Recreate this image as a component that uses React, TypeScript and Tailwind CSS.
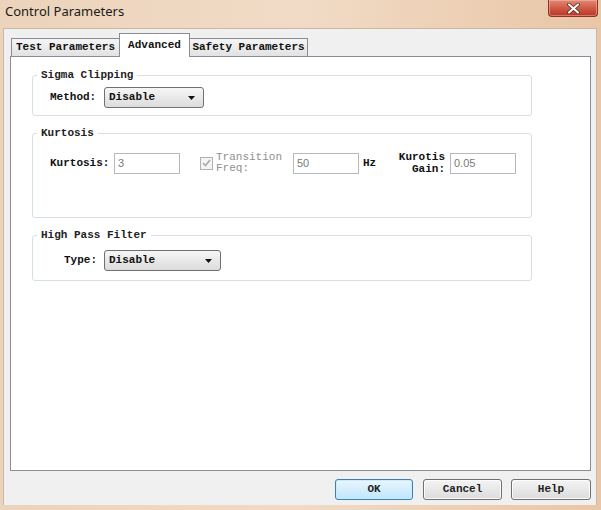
import React from "react";

const mono = { fontFamily: '"Liberation Mono", "DejaVu Sans Mono", monospace' };
const sans = { fontFamily: '"Liberation Sans", Arial, sans-serif' };

function Select({ width, value }: { width: string; value: string }) {
  return (
    <div
      className={`${width} h-[21px] flex items-center justify-between pl-[4px] pr-[8px] rounded-[3px] border border-[#707070] bg-gradient-to-b from-[#f6f6f6] to-[#dcdcdc] text-[11px] font-bold text-[#111]`}
      style={mono}
    >
      <span>{value}</span>
      <svg width="7" height="4" viewBox="0 0 7 4">
        <polygon points="0,0 7,0 3.5,4" fill="#111" />
      </svg>
    </div>
  );
}

function Input({ value }: { value: string }) {
  return (
    <div
      className="w-[66px] h-[21px] flex items-center pl-[3px] border border-[#b5b8bd] bg-white text-[11px] text-[#7a7a7a]"
      style={sans}
    >
      {value}
    </div>
  );
}

function Button({ label, width, primary }: { label: string; width: string; primary?: boolean }) {
  return (
    <div
      className={`${width} h-[21px] flex items-center justify-center rounded-[3px] border text-[11px] font-bold text-[#222] ${
        primary
          ? "border-[#3c7fb1] bg-gradient-to-b from-[#eaf6fd] to-[#bee6fd] shadow-[inset_0_0_0_1px_#c9ecfb]"
          : "border-[#707070] bg-gradient-to-b from-[#f4f4f4] to-[#dcdcdc] shadow-[inset_0_0_0_1px_#fbfbfb]"
      }`}
      style={mono}
    >
      {label}
    </div>
  );
}

export default function App() {
  return (
    <div className="w-[601px] h-[510px] flex flex-col bg-gradient-to-r from-[#ecd3bb] via-[#f1dbc6] to-[#e9c6a6] overflow-hidden">
      {/* Title bar */}
      <div className="h-[28px] flex items-start justify-between pl-[5px] pr-[3px]">
        <span className="mt-[2px] text-[13px] text-[#1b1b1b]" style={{ fontFamily: '"Noto Sans", "Open Sans", sans-serif' }}>
          Control Parameters
        </span>
        <div className="w-[50px] h-[17px] flex items-center justify-center rounded-b-[4px] border border-t-0 border-[#8d3325] bg-gradient-to-b from-[#e08a76] via-[#cf5a45] to-[#b8362a] shadow-[inset_0_0_0_1px_rgba(255,200,190,0.45)]">
          <svg width="13" height="11" viewBox="0 0 13 11">
            <path d="M2 1.5 L11 9.5 M11 1.5 L2 9.5" stroke="#5a2a24" strokeWidth="3.6" strokeLinecap="round" />
            <path d="M2 1.5 L11 9.5 M11 1.5 L2 9.5" stroke="#ffffff" strokeWidth="2" strokeLinecap="round" />
          </svg>
        </div>
      </div>

      {/* Client area */}
      <div className="ml-[3px] mr-[4px] h-[477px] flex flex-col bg-[#f0f0f0] border-l border-t border-r border-[#c9b8a8] pl-[6px] pr-[6px]">
        {/* Tabs */}
        <div className="relative z-10 mt-[4px] ml-[1px] flex items-end h-[24px] text-[11px] text-[#111]" style={mono}>
          <div className="w-[109px] h-[18px] mb-[1px] flex items-center justify-center border border-b-0 border-[#898c95] bg-gradient-to-b from-[#f5f5f5] to-[#e2e2e2] font-bold">
            Test Parameters
          </div>
          <div className="w-[71px] h-[24px] -ml-[1px] pb-[1px] flex items-center justify-center border border-b-0 border-[#898c95] bg-white font-bold">
            Advanced
          </div>
          <div className="w-[119px] h-[18px] -ml-[1px] mb-[1px] flex items-center justify-center border border-b-0 border-[#898c95] bg-gradient-to-b from-[#f5f5f5] to-[#e2e2e2] font-bold">
            Safety Parameters
          </div>
        </div>

        {/* Panel */}
        <div className="-mt-[1px] w-[581px] h-[415px] border border-[#898c95] bg-white pl-[21px] pt-[12px] flex flex-col text-[11px] text-[#111]" style={mono}>
          {/* Sigma Clipping */}
          <fieldset className="w-[500px] h-[47px] border border-[#d5dfe5] rounded-[3px] pl-[17px]">
            <legend className="-ml-[13px] px-[4px] leading-[12px] font-bold text-[#222]">Sigma Clipping</legend>
            <div className="mt-[6px] flex items-center">
              <span className="w-[54px] font-bold">Method:</span>
              <Select width="w-[100px]" value="Disable" />
            </div>
          </fieldset>

          {/* Kurtosis */}
          <fieldset className="mt-[11px] w-[500px] h-[91px] border border-[#d5dfe5] rounded-[3px] pl-[17px]">
            <legend className="-ml-[13px] px-[4px] leading-[12px] font-bold text-[#222]">Kurtosis</legend>
            <div className="mt-[13px] flex items-center h-[22px]">
              <span className="w-[64px] font-bold">Kurtosis:</span>
              <Input value="3" />
              <div className="ml-[20px] w-[13px] h-[13px] border border-[#b1b1b1] bg-[#f4f4f4] flex items-center justify-center">
                <svg width="9" height="8" viewBox="0 0 9 8">
                  <path d="M1 4 L3.5 6.5 L8 1" stroke="#a8a8a8" strokeWidth="1.6" fill="none" />
                </svg>
              </div>
              <div className="ml-[3px] w-[77px] flex flex-col leading-[11px] text-[#8f8f8f]">
                <span>Transition</span>
                <span>Freq:</span>
              </div>
              <Input value="50" />
              <span className="ml-[4px] w-[35px] font-bold">Hz</span>
              <div className="w-[47px] flex flex-col items-end leading-[12px] font-bold">
                <span>Kurotis</span>
                <span>Gain:</span>
              </div>
              <div className="ml-[5px]">
                <Input value="0.05" />
              </div>
            </div>
          </fieldset>

          {/* High Pass Filter */}
          <fieldset className="mt-[11px] w-[500px] h-[52px] border border-[#d5dfe5] rounded-[3px] pl-[31px]">
            <legend className="-ml-[27px] px-[4px] leading-[12px] font-bold text-[#222]">High Pass Filter</legend>
            <div className="mt-[9px] flex items-center">
              <span className="w-[40px] font-bold">Type:</span>
              <Select width="w-[117px]" value="Disable" />
            </div>
          </fieldset>
        </div>

        {/* Buttons */}
        <div className="mt-[8px] -mr-[1px] flex justify-end">
          <Button label="OK" width="w-[78px]" primary />
          <div className="ml-[10px]">
            <Button label="Cancel" width="w-[79px]" />
          </div>
          <div className="ml-[9px]">
            <Button label="Help" width="w-[80px]" />
          </div>
        </div>
      </div>
    </div>
  );
}
